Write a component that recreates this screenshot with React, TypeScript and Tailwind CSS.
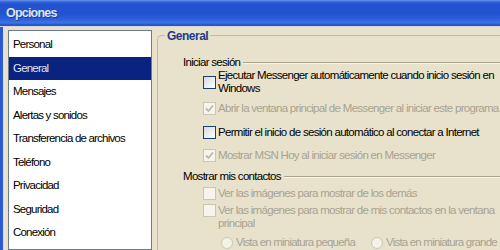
import { ReactNode } from "react";

const items = [
  "Personal",
  "General",
  "Mensajes",
  "Alertas y sonidos",
  "Transferencia de archivos",
  "Teléfono",
  "Privacidad",
  "Seguridad",
  "Conexión",
];

function Check({ checked, disabled }: { checked?: boolean; disabled?: boolean }) {
  return (
    <span
      className={
        disabled
          ? "flex h-[13px] w-[13px] shrink-0 items-center justify-center border border-[#cbc6b2] bg-[#f6f4ec]"
          : "flex h-[13px] w-[13px] shrink-0 items-center justify-center border border-[#1c3f6e] bg-[linear-gradient(135deg,#d6d8de_0%,#eef0f4_60%,#ffffff_100%)]"
      }
    >
      {checked && (
        <svg width="9" height="9" viewBox="0 0 9 9">
          <path d="M1 4.5 L3.5 7 L8 1.5" fill="none" stroke={disabled ? "#bdb9a8" : "#21a121"} strokeWidth="1.8" />
        </svg>
      )}
    </span>
  );
}

function Row({
  children,
  checked,
  disabled,
  className,
}: {
  children: ReactNode;
  checked?: boolean;
  disabled?: boolean;
  className?: string;
}) {
  return (
    <div className={`flex items-center gap-[2px] pl-[45px] ${className ?? ""}`}>
      <Check checked={checked} disabled={disabled} />
      <span className={`whitespace-nowrap ${disabled ? "text-[#a7a392]" : "text-black"}`}>{children}</span>
    </div>
  );
}

function Section({ label, className }: { label: string; className?: string }) {
  return (
    <div className={`flex items-center pl-[25px] ${className ?? ""}`}>
      <span className="text-black">{label}</span>
      <span className="ml-[3px] h-px flex-1 bg-[#a9a38c] shadow-[0_1px_0_#f7f4ea]" />
    </div>
  );
}

function Radio({ label }: { label: string }) {
  return (
    <div className="flex items-center gap-[3px]">
      <span className="h-[12px] w-[12px] shrink-0 rounded-full border border-[#cbc6b2] bg-[#f4f1e7]" />
      <span className="whitespace-nowrap tracking-[-0.8px] text-[#a7a392]">{label}</span>
    </div>
  );
}

export default function App() {
  return (
    <div className="h-[250px] w-[500px] overflow-hidden bg-[#e8e2cc] font-['Liberation_Sans',Arial,sans-serif] text-[11.5px] leading-[13px] tracking-[-0.7px]">
      {/* Title bar */}
      <div className="flex h-[27px] items-center bg-[linear-gradient(to_bottom,#6a96ea_0%,#3a6ae0_6%,#2252cf_14%,#2353d0_50%,#2b5fd9_70%,#3b73e8_84%,#2e5fd6_90%,#1b3ea2_94%,#c6d2ea_97%,#e8e2cc_100%)] pl-[6px]">
        <span className="text-[12.5px] font-bold tracking-[-0.8px] text-[#dbe5f7] [text-shadow:1px_1px_0_#1a3a9a]">Opciones</span>
      </div>

      <div className="flex h-[223px] border-l-[3px] border-[#2a59d3] pl-[5px] pt-[3px]">
        {/* Category list */}
        <div className="h-full w-[144px] shrink-0 border border-[#6e7b8c] bg-white pt-[2px] tracking-[-0.8px]">
          {items.map((it) => (
            <div
              key={it}
              className={
                it === "General"
                  ? "flex h-[23.5px] items-center bg-[#0b2380] pl-[4px] text-[#dfe3f3]"
                  : "flex h-[23.5px] items-center pl-[4px] text-black"
              }
            >
              {it}
            </div>
          ))}
        </div>

        {/* Settings panel */}
        <div className="flex-1 pl-[5px]">
          <div className="mt-[5px] h-[300px] rounded-tl-[5px] border-l border-t border-[#c2bba3]">
            <div className="-mt-[8px] ml-[7px] flex h-[16px] w-fit items-center bg-[#e8e2cc] px-[2px] text-[12px] font-bold tracking-[-0.5px] text-[#213a8c]">
              General
            </div>

            <Section label="Iniciar sesión" className="mt-[12px]" />
            <Row>
              Ejecutar Messenger automáticamente cuando inicio sesión en
              <br />
              Windows
            </Row>
            <Row checked disabled className="mt-[7px]">
              Abrir la ventana principal de Messenger al iniciar este programa
            </Row>
            <Row className="mt-[11px]">Permitir el inicio de sesión automático al conectar a Internet</Row>
            <Row checked disabled className="mt-[10px]">
              Mostrar MSN Hoy al iniciar sesión en Messenger
            </Row>

            <Section label="Mostrar mis contactos" className="mt-[8px]" />
            <Row disabled className="mt-[4px]">
              Ver las imágenes para mostrar de los demás
            </Row>
            <div className="mt-[4px] flex items-start gap-[2px] pl-[45px]">
              <Check disabled />
              <span className="whitespace-nowrap text-[#a7a392]">
                Ver las imágenes para mostrar de mis contactos en la ventana
                <br />
                principal
              </span>
            </div>
            <div className="mt-[6px] flex gap-[16px] pl-[63px]">
              <Radio label="Vista en miniatura pequeña" />
              <Radio label="Vista en miniatura grande" />
            </div>
          </div>
        </div>
      </div>
    </div>
  );
}
